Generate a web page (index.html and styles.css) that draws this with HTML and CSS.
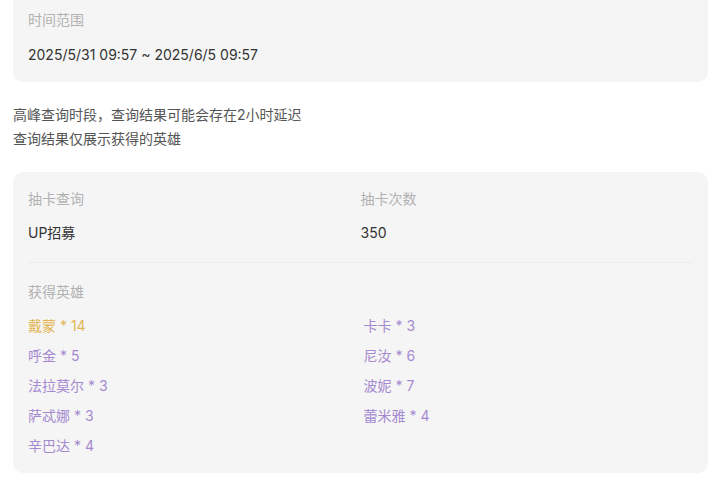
FILE: index.html
```html
<!DOCTYPE html>
<html lang="zh-CN">
<head>
<meta charset="utf-8">
<link rel="stylesheet" href="styles.css">
</head>
<body>
<div class="page">
  <section class="card card-time">
    <div class="label">时间范围</div>
    <div class="value">2025/5/31 09:57 ~ 2025/6/5 09:57</div>
  </section>
  <div class="notes">
    <p>高峰查询时段，查询结果可能会存在2小时延迟</p>
    <p>查询结果仅展示获得的英雄</p>
  </div>
  <section class="card card-result">
    <div class="summary">
      <div class="field">
        <div class="label">抽卡查询</div>
        <div class="value">UP招募</div>
      </div>
      <div class="field">
        <div class="label">抽卡次数</div>
        <div class="value">350</div>
      </div>
    </div>
    <div class="heroes">
      <div class="label">获得英雄</div>
      <ul class="hero-list">
        <li class="gold">戴蒙 * 14</li>
        <li>卡卡 * 3</li>
        <li>呼金 * 5</li>
        <li>尼汝 * 6</li>
        <li>法拉莫尔 * 3</li>
        <li>波妮 * 7</li>
        <li>萨忒娜 * 3</li>
        <li>蕾米雅 * 4</li>
        <li>辛巴达 * 4</li>
      </ul>
    </div>
  </section>
</div>
</body>
</html>
```
FILE: styles.css
```css
* { box-sizing: border-box; }
html, body { margin: 0; padding: 0; background: #ffffff; }
body {
  font-family: Inter, "Noto Sans CJK SC", "Noto Sans", sans-serif;
  font-size: 14px;
  color: #333333;
}
.page {
  padding: 0 12px 0 13px;
  display: flex;
  flex-direction: column;
}
.card {
  background: #f5f5f5;
  border-radius: 10px;
  padding: 0 15px;
}
.label {
  color: #b2b2b2;
  line-height: 20px;
}
.value {
  color: #333333;
  line-height: 20px;
}
.card-time {
  margin-top: -10px;
  padding-top: 20px;
  padding-bottom: 17px;
  display: flex;
  flex-direction: column;
  gap: 15px;
}
.notes {
  padding: 21px 0;
  color: #555555;
  line-height: 24px;
}
.notes p { margin: 0; }
.card-result {
  padding-top: 17px;
  padding-bottom: 12px;
}
.summary {
  display: grid;
  grid-template-columns: 1fr 1fr;
  padding-bottom: 19px;
  border-bottom: 1px solid #ececec;
}
.field {
  display: flex;
  flex-direction: column;
  gap: 14px;
}
.heroes {
  padding-top: 19px;
}
.hero-list {
  list-style: none;
  margin: 9px 0 0;
  padding: 0;
  display: grid;
  grid-template-columns: 1fr 1fr;
}
.hero-list li {
  line-height: 30px;
  color: #a58ad0;
}
.hero-list li:nth-child(even) { padding-left: 3px; }
.hero-list li.gold { color: #e3b653; }
```
